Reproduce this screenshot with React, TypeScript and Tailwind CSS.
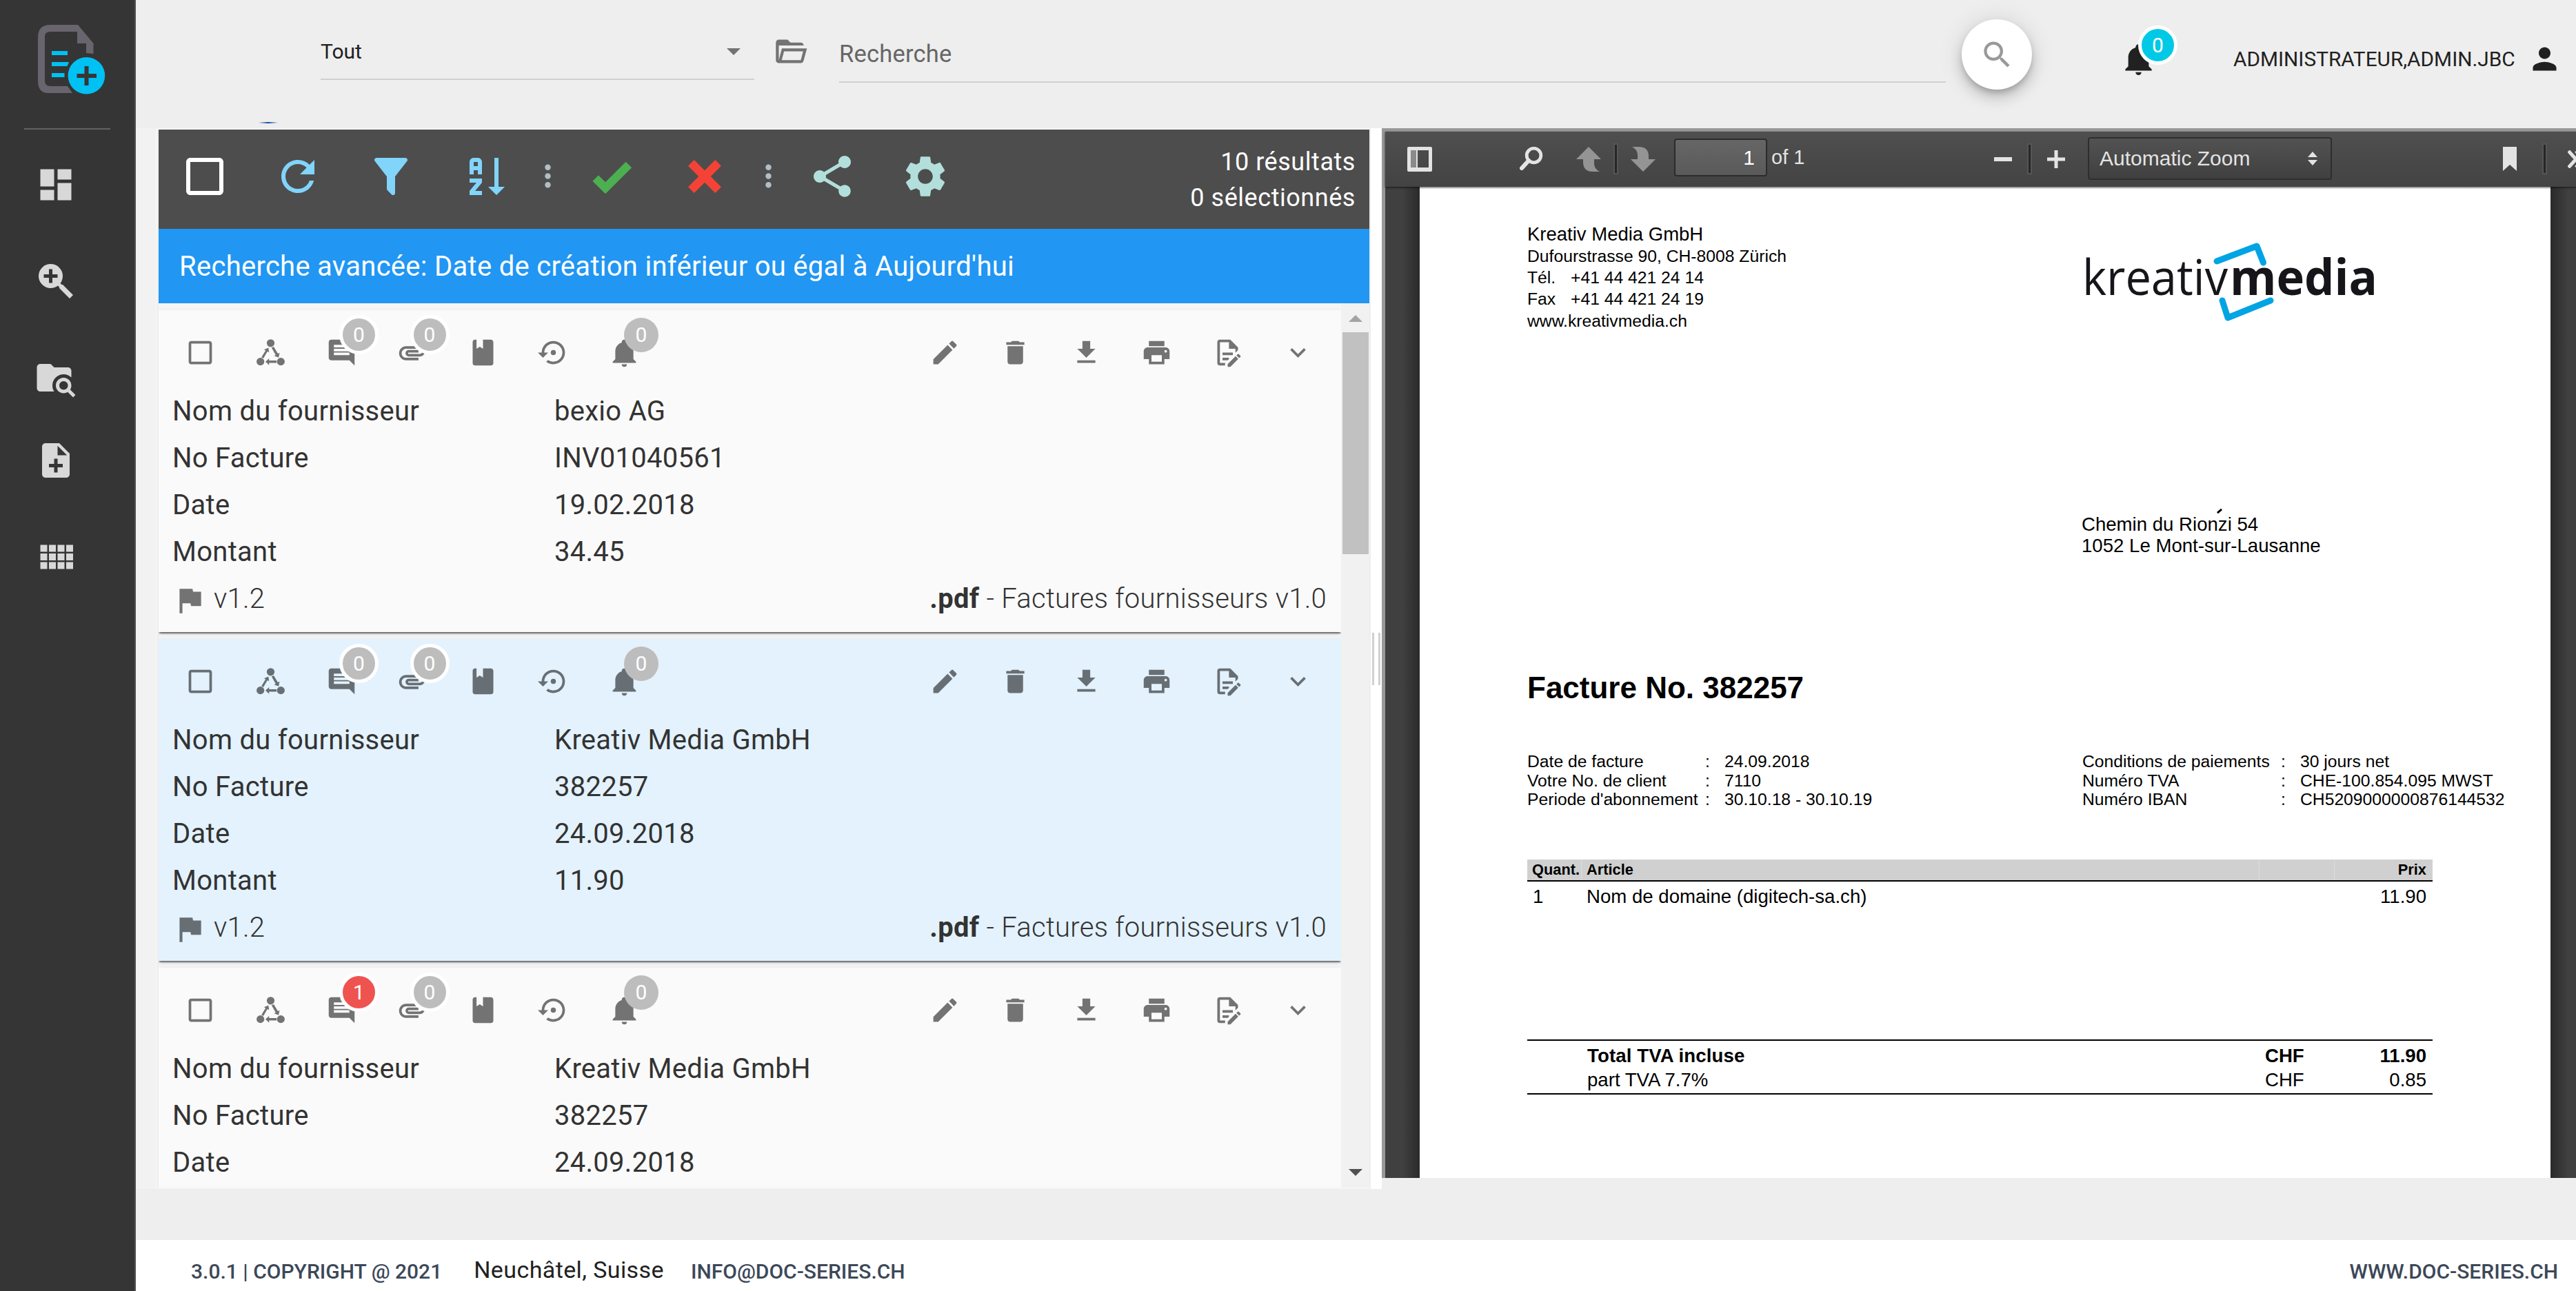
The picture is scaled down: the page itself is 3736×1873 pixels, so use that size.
import { ReactNode } from 'react';
import {
  MdAttachment,
  MdCheckBoxOutlineBlank,
  MdComment,
  MdDashboard,
  MdDelete,
  MdEdit,
  MdExpandMore,
  MdFlag,
  MdMoreVert,
  MdNoteAdd,
  MdPerson,
  MdPrint,
  MdRefresh,
  MdSearch,
  MdSettings,
  MdShare,
} from 'react-icons/md';

interface Doc {
  id: number;
  selected?: boolean;
  comments: number;
  fields: [string, string][];
  version?: string;
}

const docs: Doc[] = [
  {
    id: 1,
    comments: 0,
    fields: [
      ['Nom du fournisseur', 'bexio AG'],
      ['No Facture', 'INV01040561'],
      ['Date', '19.02.2018'],
      ['Montant', '34.45'],
    ],
    version: 'v1.2',
  },
  {
    id: 2,
    selected: true,
    comments: 0,
    fields: [
      ['Nom du fournisseur', 'Kreativ Media GmbH'],
      ['No Facture', '382257'],
      ['Date', '24.09.2018'],
      ['Montant', '11.90'],
    ],
    version: 'v1.2',
  },
  {
    id: 3,
    comments: 1,
    fields: [
      ['Nom du fournisseur', 'Kreativ Media GmbH'],
      ['No Facture', '382257'],
      ['Date', '24.09.2018'],
    ],
  },
];

// Glyphs missing from the Md set
const icons = {
  zoomPlus:
    'M9,2A7,7 0 0,1 16,9C16,10.57 15.5,12 14.61,13.19L15.41,14H16L22,20L20,22L14,16V15.41L13.19,14.61C12,15.5 10.57,16 9,16A7,7 0 0,1 2,9A7,7 0 0,1 9,2M8,5V8H5V10H8V13H10V10H13V8H10V5H8Z',
  folderSearch:
    'M16.5,12C19,12 21,14 21,16.5C21,17.38 20.75,18.21 20.31,18.9L23.39,22L22,23.39L18.88,20.32C18.19,20.75 17.37,21 16.5,21C14,21 12,19 12,16.5C12,14 14,12 16.5,12M16.5,14A2.5,2.5 0 0,0 14,16.5A2.5,2.5 0 0,0 16.5,19A2.5,2.5 0 0,0 19,16.5A2.5,2.5 0 0,0 16.5,14M9,4L11,6H19A2,2 0 0,1 21,8V11.81C19.83,10.69 18.25,10 16.5,10A6.5,6.5 0 0,0 10,16.5C10,17.79 10.37,19 11,20H3C1.89,20 1,19.1 1,18V6C1,4.89 1.89,4 3,4H9Z',
  grid: 'M3 5H7V9H3ZM8 5H12V9H8ZM13 5H17V9H13ZM18 5H22V9H18ZM3 10H7V14H3ZM8 10H12V14H8ZM13 10H17V14H13ZM18 10H22V14H18ZM3 15H7V19H3ZM8 15H12V19H8ZM13 15H17V19H13ZM18 15H22V19H18Z',
  folderOpen:
    'M6.1,10L4,18V8H21A2,2 0 0,0 19,6H12L10,4H4A2,2 0 0,0 2,6V18A2,2 0 0,0 4,20H19C19.9,20 20.7,19.4 20.9,18.5L23.2,10H6.1M19,18H6L7.6,12H20.6L19,18Z',
  filter:
    'M14,12V19.88C14.04,20.18 13.94,20.5 13.71,20.71C13.32,21.1 12.69,21.1 12.3,20.71L10.29,18.7C10.06,18.47 9.96,18.16 10,17.87V12H9.97L4.21,4.62C3.87,4.19 3.95,3.56 4.38,3.22C4.57,3.08 4.78,3 5,3V3H19V3C19.22,3 19.43,3.08 19.62,3.22C20.05,3.56 20.13,4.19 19.79,4.62L14.03,12H14Z',
  sortAz:
    'M19 17H22L18 21L14 17H17V3H19M11 13V15L7.67 19H11V21H5V19L8.33 15H5V13M9 3H7C5.9 3 5 3.9 5 5V11H7V9H9V11H11V5C11 3.9 10.11 3 9 3M9 7H7V5H9Z',
  checkBold: 'M9,20.42L2.79,14.21L5.62,11.38L9,14.77L18.88,4.88L21.71,7.71L9,20.42Z',
  closeThick:
    'M20 6.91L17.09 4L12 9.09L6.91 4L4 6.91L9.09 12L4 17.09L6.91 20L12 14.91L17.09 20L20 17.09L14.91 12L20 6.91Z',
  bell: 'M21,19V20H3V19L5,17V11C5,7.9 7.03,5.17 10,4.29C10,4.19 10,4.1 10,4A2,2 0 0,1 12,2A2,2 0 0,1 14,4C14,4.1 14,4.19 14,4.29C16.97,5.17 19,7.9 19,11V17L21,19M14,21A2,2 0 0,1 12,23A2,2 0 0,1 10,21',
  book: 'M18,22A2,2 0 0,0 20,20V4C20,2.89 19.1,2 18,2H12V9L9.5,7.5L7,9V2H6A2,2 0 0,0 4,4V20A2,2 0 0,0 6,22H18Z',
  restore:
    'M12,3A9,9 0 0,0 3,12H0L4,16L8,12H5A7,7 0 0,1 12,5A7,7 0 0,1 19,12A7,7 0 0,1 12,19C10.5,19 9.09,18.5 7.94,17.7L6.5,19.14C8.04,20.3 9.94,21 12,21A9,9 0 0,0 21,12A9,9 0 0,0 12,3M14,12A2,2 0 0,0 12,10A2,2 0 0,0 10,12A2,2 0 0,0 12,14A2,2 0 0,0 14,12Z',
  download: 'M5,20H19V18H5M19,9H15V3H9V9H5L12,16L19,9Z',
  fileEdit:
    'M8,12H16V14H8V12M10,20H6V4H13V9H18V12.1L20,10.1V8L14,2H6A2,2 0 0,0 4,4V20A2,2 0 0,0 6,22H10V20M8,18H12.1L13,17.1V16H8V18M20.2,13C20.3,13 20.5,13.1 20.6,13.2L21.9,14.5C22.1,14.7 22.1,15.1 21.9,15.3L20.9,16.3L18.8,14.2L19.8,13.2C19.9,13.1 20,13 20.2,13M20.2,16.9L14.1,23H12V20.9L18.1,14.8L20.2,16.9Z',
};

function Icon({ d, className }: { d: string; className?: string }) {
  return (
    <svg viewBox="0 0 24 24" fill="currentColor" className={className}>
      <path d={d} />
    </svg>
  );
}

function WorkflowIcon({ className }: { className?: string }) {
  return (
    <svg viewBox="0 0 24 24" fill="currentColor" className={className}>
      <circle cx="12" cy="4.7" r="3" />
      <circle cx="4.1" cy="19" r="3" />
      <circle cx="19.9" cy="19" r="3" />
      <path d="M4.9 15.6L8.1 10.4L6.9 9.7L10.3 8.2L10.8 11.9L9.5 11.2L6.4 16.5Z" />
      <path d="M12.7 8.3L15.9 13.8L14.7 14.5L18.2 15.8L18.9 12.1L17.6 12.8L14.4 7.5Z" />
      <path d="M16.6 18.1H10.8V16.5L8 19L10.8 21.7V20H16.6Z" />
    </svg>
  );
}

function Logo() {
  return (
    <svg viewBox="0 0 110 110" className="w-[110px] h-[110px]">
      <path
        fill="#68656e"
        d="M19 3H59L81.500 30V45L71 44V30H58V13H19Q11 13 11 20V84Q11 92 19 92H44L51 102H16Q1 102 1 84V21Q1 3 19 3Z"
      />
      <path fill="#00c1f3" d="M21 41H44V47H21ZM21 57H46L43.500 63H21ZM21 73H39.500V79H21Z" />
      <circle cx="71.400" cy="76.700" r="26.800" fill="#00c1f3" />
      <path fill="#363636" d="M68.500 63H74.500V74H86V80H74.500V91H68.500V80H57.500V74H68.500Z" />
    </svg>
  );
}

function Sidebar() {
  return (
    <aside className="w-[197px] shrink-0 bg-[#353535] border-r-2 border-[#4f4f4f] flex flex-col text-[#d8d8d8]">
      <div className="h-[186px] pl-[54px] pt-[33px]">
        <Logo />
      </div>
      <div className="ml-[35px] w-[125px] h-0.5 bg-[#626262]" />
      <nav className="pl-[51px] pt-[50px] flex flex-col">
        <MdDashboard className="size-[60px]" />
        <Icon d={icons.zoomPlus} className="size-[60px] mt-20" />
        <Icon d={icons.folderSearch} className="size-[60px] mt-20" />
        <MdNoteAdd className="size-[60px] mt-[60px]" />
        <Icon d={icons.grid} className="size-[60px] mt-20" />
      </nav>
    </aside>
  );
}

function Header() {
  return (
    <header className="relative h-[186px] flex text-[#212121]">
      <div className="ml-[268px] w-[629px] h-[116px] border-b-2 border-[#d0d0d0] flex justify-between text-[30px] leading-[40px]">
        <span className="mt-[55px]">Tout</span>
        <span className="mt-[70px] mr-[20px] size-0 border-x-[10px] border-x-transparent border-t-[10px] border-t-[#737373]" />
      </div>
      <Icon d={icons.folderOpen} className="size-[51px] ml-[27px] mt-[49px] text-[#737373]" />
      <div className="ml-[45px] w-[1605px] h-[120px] border-b-2 border-[#d0d0d0] text-[#666] text-[34.500px] leading-[40px] pt-[58px] tracking-[0.2px]">
        Recherche
      </div>
      <button className="ml-[23px] mt-[28px] size-[102px] rounded-full bg-white flex items-center justify-center shadow-[0_6px_10px_-2px_rgba(0,0,0,0.2),0_12px_20px_rgba(0,0,0,0.14),0_2px_36px_rgba(0,0,0,0.12)]">
        <MdSearch className="size-[51px] text-[#999]" />
      </button>
      <div className="relative ml-[129px] mt-[60px] size-[51px]">
        <Icon d={icons.bell} className="size-[51px]" />
        <span className="absolute left-[25px] top-[-23px] size-[57px] rounded-full border-[5px] border-white bg-[#00c9e6] text-white text-[30px] leading-[47px] text-center">
          0
        </span>
      </div>
      <span className="ml-[112px] mt-[66px] text-[29.800px] leading-[40px] whitespace-nowrap">
        ADMINISTRATEUR,ADMIN.JBC
      </span>
      <MdPerson className="absolute right-[20px] top-[60px] size-[51px]" />
      {/* top edge of the loading spinner */}
      <span className="absolute left-[178px] top-[177px] w-[28px] h-[2px] bg-linear-to-r from-transparent via-[#0d47a1] to-transparent" />
    </header>
  );
}

function ToolButton({ children }: { children: ReactNode }) {
  return <div className="w-[135px] h-[135px] flex items-center justify-center">{children}</div>;
}

function Dots() {
  return (
    <div className="w-[50px] flex justify-center text-[#b0bec5]">
      <MdMoreVert className="size-[51px] shrink-0" />
    </div>
  );
}

function Toolbar() {
  return (
    <div className="h-[144px] bg-[#4d4d4d] flex items-center pr-[20px] pb-[9px] text-white">
      <div className="flex items-center -ml-px">
        <ToolButton>
          <MdCheckBoxOutlineBlank className="size-[72px]" />
        </ToolButton>
        <ToolButton>
          <MdRefresh className="size-[72px] text-[#81d4fa]" />
        </ToolButton>
        <ToolButton>
          <Icon d={icons.filter} className="size-[72px] text-[#81d4fa]" />
        </ToolButton>
        <ToolButton>
          <Icon d={icons.sortAz} className="size-[72px] text-[#81d4fa]" />
        </ToolButton>
        <Dots />
        <ToolButton>
          <Icon d={icons.checkBold} className="size-[72px] text-[#4caf50]" />
        </ToolButton>
        <ToolButton>
          <Icon d={icons.closeThick} className="size-[72px] text-[#f44336]" />
        </ToolButton>
        <Dots />
        <ToolButton>
          <MdShare className="size-[72px] text-[#b2dfdb]" />
        </ToolButton>
        <ToolButton>
          <MdSettings className="size-[72px] text-[#b2dfdb]" />
        </ToolButton>
      </div>
      <div className="ml-auto text-right text-[36px] leading-[52px] pt-[10px] tracking-[0.55px]">
        <div>10 résultats</div>
        <div>0 sélectionnés</div>
      </div>
    </div>
  );
}

function Slot({ children }: { children: ReactNode }) {
  return (
    <div className="relative w-[102.500px] flex items-center justify-center text-black/54">
      {children}
    </div>
  );
}

function Badge({ count }: { count: number }) {
  return (
    <span
      className={`absolute left-[48px] -top-[3px] size-[57px] rounded-full border-[5px] border-white text-white text-[30px] leading-[47px] text-center ${
        count > 0 ? 'bg-[#ef5350]' : 'bg-[#bdbdbd]'
      }`}
    >
      {count}
    </span>
  );
}

function DocCard({ doc }: { doc: Doc }) {
  return (
    <div
      className={`h-[467px] shrink-0 pt-[10px] shadow-[0_4px_2px_-2px_rgba(0,0,0,0.35),0_2px_2px_rgba(0,0,0,0.28),0_2px_6px_rgba(0,0,0,0.12)] ${
        doc.selected ? 'bg-[#e3f2fd]' : 'bg-[#fafafa]'
      }`}
    >
      <div className="h-[103px] flex pl-[9px] pr-[11px]">
        <Slot>
          <MdCheckBoxOutlineBlank className="size-[45px]" />
        </Slot>
        <Slot>
          <WorkflowIcon className="size-[45px]" />
        </Slot>
        <div className="relative flex">
          <Slot>
            <MdComment className="size-[45px]" />
          </Slot>
          <Badge count={doc.comments} />
        </div>
        <div className="relative flex">
          <Slot>
            <MdAttachment className="size-[45px]" />
          </Slot>
          <Badge count={0} />
        </div>
        <Slot>
          <Icon d={icons.book} className="size-[45px]" />
        </Slot>
        <Slot>
          <Icon d={icons.restore} className="size-[45px]" />
        </Slot>
        <div className="relative flex">
          <Slot>
            <Icon d={icons.bell} className="size-[45px]" />
          </Slot>
          <span className="absolute left-[51px] top-[1px] size-[50px] rounded-full bg-[#bdbdbd] text-white text-[30px] leading-[50px] text-center">
            0
          </span>
        </div>
        <div className="ml-auto flex">
          <Slot>
            <MdEdit className="size-[45px]" />
          </Slot>
          <Slot>
            <MdDelete className="size-[45px]" />
          </Slot>
          <Slot>
            <Icon d={icons.download} className="size-[45px]" />
          </Slot>
          <Slot>
            <MdPrint className="size-[45px]" />
          </Slot>
          <Slot>
            <Icon d={icons.fileEdit} className="size-[45px]" />
          </Slot>
          <Slot>
            <MdExpandMore className="size-[45px]" />
          </Slot>
        </div>
      </div>

      <div className="pl-5 text-[40px] leading-[68px] tracking-[0.28px] text-[#333]">
        {doc.fields.map(([label, value]) => (
          <div key={label} className="flex">
            <span className="w-[554px]">{label}</span>
            <span>{value}</span>
          </div>
        ))}
        {doc.version && (
          <div className="flex items-center pr-[21px] font-light">
            <MdFlag className="size-[50px] text-black/54 mt-1" />
            <span className="ml-[10px]">{doc.version}</span>
            <span className="ml-auto">
              <b className="font-bold">.pdf</b> - Factures fournisseurs v1.0
            </span>
          </div>
        )}
      </div>
    </div>
  );
}

function ResultList() {
  return (
    <section className="w-[1760px] shrink-0 border-2 border-r-0 border-[#f5f5f5] pl-0.5 flex flex-col">
      <Toolbar />
      <div className="h-[108px] bg-[#2196f3] text-white text-[40px] leading-[110px] tracking-[0.28px] pl-[30px]">
        Recherche avancée: Date de création inférieur ou égal à Aujourd'hui
      </div>
      <div className="flex flex-1 min-h-0">
        <div className="flex-1 min-w-0 overflow-hidden bg-[#f5f5f5] pt-[10px] flex flex-col gap-[10px]">
          {docs.map((doc) => (
            <DocCard key={doc.id} doc={doc} />
          ))}
        </div>
        <div className="w-[41px] bg-[#f1f1f1] flex flex-col items-center pt-[17px]">
          <span className="size-0 border-x-[10px] border-x-transparent border-b-[10px] border-b-[#a3a3a3]" />
          <div className="mt-[15px] w-[38px] h-[322px] bg-[#c1c1c1]" />
          <span className="mt-auto mb-[17px] size-0 border-x-[10px] border-x-transparent border-t-[10px] border-t-[#505050]" />
        </div>
      </div>
    </section>
  );
}

function ToolbarSeparator({ className }: { className: string }) {
  return (
    <div className={`w-[3px] h-[41px] shrink-0 bg-[#272727] outline-2 outline-[#555] ${className}`} />
  );
}

function ViewerToolbar() {
  return (
    <div className="relative z-10 h-[80px] overflow-hidden bg-linear-to-b from-[#4f4f4f] to-[#434343] flex items-start text-[#e3e3e3] text-[30px] whitespace-nowrap shadow-[0_1px_3px_rgba(0,0,0,0.7)]">
      <svg viewBox="0 0 36 36" className="ml-[32px] mt-[22px] size-[36px] shrink-0">
        <path
          fill="#e3e3e3"
          fillRule="evenodd"
          d="M2 0H34Q36 0 36 2V34Q36 36 34 36H2Q0 36 0 34V2Q0 0 2 0ZM15 5V30H31V5Z"
        />
        <path fill="#8a8a8a" d="M5 5H13V30H5Z" />
      </svg>
      <svg viewBox="0 0 34 34" className="ml-[127px] mt-[22px] size-[34px] shrink-0">
        <circle cx="20.500" cy="12.500" r="10.300" fill="none" stroke="#e3e3e3" strokeWidth="4.800" />
        <path d="M13 20L3 31" stroke="#e3e3e3" strokeWidth="6" strokeLinecap="round" />
      </svg>
      <svg viewBox="0 0 36 36" className="ml-[48px] mt-[22px] size-[36px] shrink-0">
        <path fill="#949494" d="M18 0L36 18H26V24Q26 32 34 36H24Q10 36 10 22V18H0Z" />
      </svg>
      <ToolbarSeparator className="ml-[20px] mt-[19px]" />
      <svg viewBox="0 0 36 36" className="ml-[20px] mt-[22px] size-[36px] shrink-0">
        <path fill="#949494" d="M18 36L0 18H10V12Q10 4 2 0H12Q26 0 26 14V18H36Z" />
      </svg>
      <div className="ml-[27px] mt-[10px] w-[135px] h-[55px] shrink-0 rounded-[4px] border-2 border-[#2b2b2b] bg-linear-to-b from-[#666] to-[#5a5a5a] text-right pr-[16px] leading-[52px] text-white">
        1
      </div>
      <span className="ml-[6px] mt-[19px] w-[60px] shrink-0 text-[29px] leading-[36px]">of 1</span>
      <div className="ml-[263px] mt-[37px] w-[26px] h-[6px] shrink-0 bg-[#e3e3e3]" />
      <ToolbarSeparator className="ml-[24px] mt-[19px]" />
      <svg viewBox="0 0 26 26" className="ml-[24px] mt-[27px] size-[26px] shrink-0">
        <path fill="#e3e3e3" d="M10.500 0H15.500V10.500H26V15.500H15.500V26H10.500V15.500H0V10.500H10.500Z" />
      </svg>
      <div className="ml-[33px] mt-[8px] w-[354px] h-[62px] shrink-0 rounded-[4px] border-2 border-[#2e2e2e] bg-linear-to-b from-[#525252] to-[#404040] flex items-center justify-between pl-[15px] pr-[19px] leading-[58px]">
        Automatic Zoom
        <svg viewBox="0 0 14 20" className="w-[14px] h-[20px]">
          <path fill="#e3e3e3" d="M7 0L14 8H0ZM7 20L14 12H0Z" />
        </svg>
      </div>
      <svg viewBox="0 0 20 35" className="ml-[248px] mt-[22px] w-[20px] h-[35px] shrink-0">
        <path fill="#e3e3e3" d="M0 0H20V35L10 26L0 35Z" />
      </svg>
      <ToolbarSeparator className="ml-[39px] mt-[19px]" />
      <svg viewBox="0 0 26 26" className="ml-[32px] mt-[27px] size-[26px] shrink-0">
        <path d="M1 1L12 13L1 25M12 1L23 13L12 25" fill="none" stroke="#e3e3e3" strokeWidth="5" />
      </svg>
    </div>
  );
}

function KreativLogo() {
  return (
    <svg viewBox="0 0 426 120" className="w-[426px] h-[120px] overflow-visible">
      <g fill="none" stroke="#00a4e4" strokeWidth="9" strokeLinecap="round" strokeLinejoin="round">
        <path d="M191 29L249 7L258.500 31" />
        <path d="M199 86L207 111L269 86" />
      </g>
      <text x="-4" y="78" fontSize="72" fill="#16161a" textLength="211" lengthAdjust="spacingAndGlyphs" className="font-['Open_Sans']">
        kreativ
      </text>
      <text x="210" y="78" fontSize="72" fontWeight="700" fill="#16161a" textLength="214" lengthAdjust="spacingAndGlyphs" className="font-['Open_Sans']">
        media
      </text>
    </svg>
  );
}

function MetaRows({ rows, labelClass }: { rows: [string, string][]; labelClass: string }) {
  return (
    <div className="text-[24.700px] leading-[27.700px]">
      {rows.map(([label, value]) => (
        <div key={label} className="flex whitespace-nowrap">
          <span className={labelClass}>{label}</span>
          <span className="w-[28px]">:</span>
          <span>{value}</span>
        </div>
      ))}
    </div>
  );
}

function InvoicePage() {
  return (
    <div className="w-[1640px] bg-white pl-[156px] pt-[53px] text-black">
      <div className="flex h-[421px]">
        <div className="w-[809px] text-[24.700px] leading-[31.200px]">
          <div className="text-[27.500px] leading-8">Kreativ Media GmbH</div>
          <div>Dufourstrasse 90, CH-8008 Zürich</div>
          <div className="flex">
            <span className="w-[63px]">Tél.</span>+41 44 421 24 14
          </div>
          <div className="flex">
            <span className="w-[63px]">Fax</span>+41 44 421 24 19
          </div>
          <div>www.kreativmedia.ch</div>
        </div>
        <div className="pt-[26px]">
          <KreativLogo />
        </div>
      </div>

      <div className="relative ml-[804px] h-[225px] text-[27.600px] leading-[31px]">
        <div>Chemin du Rionzi 54</div>
        <div>1052 Le Mont-sur-Lausanne</div>
        {/* scan speck over the street name */}
        <span className="absolute left-[196px] -top-[5px] w-[8px] h-[3px] -rotate-40 bg-black" />
      </div>

      <h1 className="text-[44px] leading-[56px] font-bold h-[121px]">Facture No. 382257</h1>

      <div className="flex h-[156px]">
        <div className="w-[805px]">
          <MetaRows
            labelClass="w-[258px]"
            rows={[
              ['Date de facture', '24.09.2018'],
              ['Votre No. de client', '7110'],
              ["Periode d'abonnement", '30.10.18 - 30.10.19'],
            ]}
          />
        </div>
        <MetaRows
          labelClass="w-[288px]"
          rows={[
            ['Conditions de paiements', '30 jours net'],
            ['Numéro TVA', 'CHE-100.854.095 MWST'],
            ['Numéro IBAN', 'CH5209000000876144532'],
          ]}
        />
      </div>

      <div className="w-[1313px] text-[27.600px]">
        <div className="h-[32px] bg-[#d0d0d0] border-b-2 border-black flex text-[21.800px] leading-[29px] font-bold">
          <span className="w-[79px] pl-[7px] border-r border-[#dcdcdc]">Quant.</span>
          <span className="w-[983px] pl-[7px] border-r border-[#dcdcdc]">Article</span>
          <span className="w-[109px] border-r border-[#dcdcdc]" />
          <span className="flex-1 text-right pr-[9px]">Prix</span>
        </div>
        <div className="h-[229px] flex leading-[44px]">
          <span className="w-[79px] pl-[8px]">1</span>
          <span className="w-[983px] pl-[7px]">Nom de domaine (digitech-sa.ch)</span>
          <span className="flex-1 text-right pr-[9px]">11.90</span>
        </div>
        <div className="h-[80px] border-y-2 border-black pt-[4px] leading-[35px]">
          <div className="flex font-bold">
            <span className="pl-[87px] w-[1070px] tracking-[0.12px]">Total TVA incluse</span>
            <span>CHF</span>
            <span className="flex-1 text-right pr-[9px]">11.90</span>
          </div>
          <div className="flex">
            <span className="pl-[87px] w-[1070px]">part TVA 7.7%</span>
            <span>CHF</span>
            <span className="flex-1 text-right pr-[9px]">0.85</span>
          </div>
        </div>
      </div>
    </div>
  );
}

function PdfViewer() {
  return (
    <section className="flex-1 min-w-0 h-[1523px] border-l-[5px] border-t-[5px] border-[#999] bg-[#3f3f3f] flex flex-col font-['Liberation_Sans',Arial,sans-serif]">
      <ViewerToolbar />
      <div className="flex flex-1">
        <div className="w-[50px] bg-linear-to-r from-[#404040] from-50% to-[#2a2a2a]" />
        <InvoicePage />
        <div className="flex-1 bg-linear-to-r from-[#2a2a2a] to-[#404040] to-70%" />
      </div>
    </section>
  );
}

function Footer() {
  return (
    <footer className="h-[74px] bg-white flex pl-[80px] pr-[26px] pt-[28px] text-[30px] leading-[36px] font-medium text-[#3c4858]">
      <span>3.0.1 | COPYRIGHT @ 2021</span>
      <span className="ml-[46px] -mt-[3px] text-[34px] tracking-[0.4px] font-normal text-[#212121]">
        Neuchâtel, Suisse
      </span>
      <span className="ml-[39px]">INFO@DOC-SERIES.CH</span>
      <span className="ml-auto">WWW.DOC-SERIES.CH</span>
    </footer>
  );
}

export default function App() {
  return (
    <div className="w-[3736px] h-[1873px] overflow-hidden flex bg-[#eee] font-[Roboto,sans-serif]">
      <Sidebar />
      <div className="flex-1 min-w-0 flex flex-col">
        <Header />
        <main className="h-[1539px] flex">
          <div className="w-[29px] bg-[#f2f2f2]" />
          <ResultList />
          <div className="w-[18px] bg-white border-l-2 border-[#eee] flex justify-center gap-[6px] pt-[732px]">
            <span className="w-[3px] h-[76px] bg-[#d0d0d0]" />
            <span className="w-[3px] h-[76px] bg-[#d0d0d0]" />
          </div>
          <PdfViewer />
        </main>
        <div className="h-[74px]" />
        <Footer />
      </div>
    </div>
  );
}
